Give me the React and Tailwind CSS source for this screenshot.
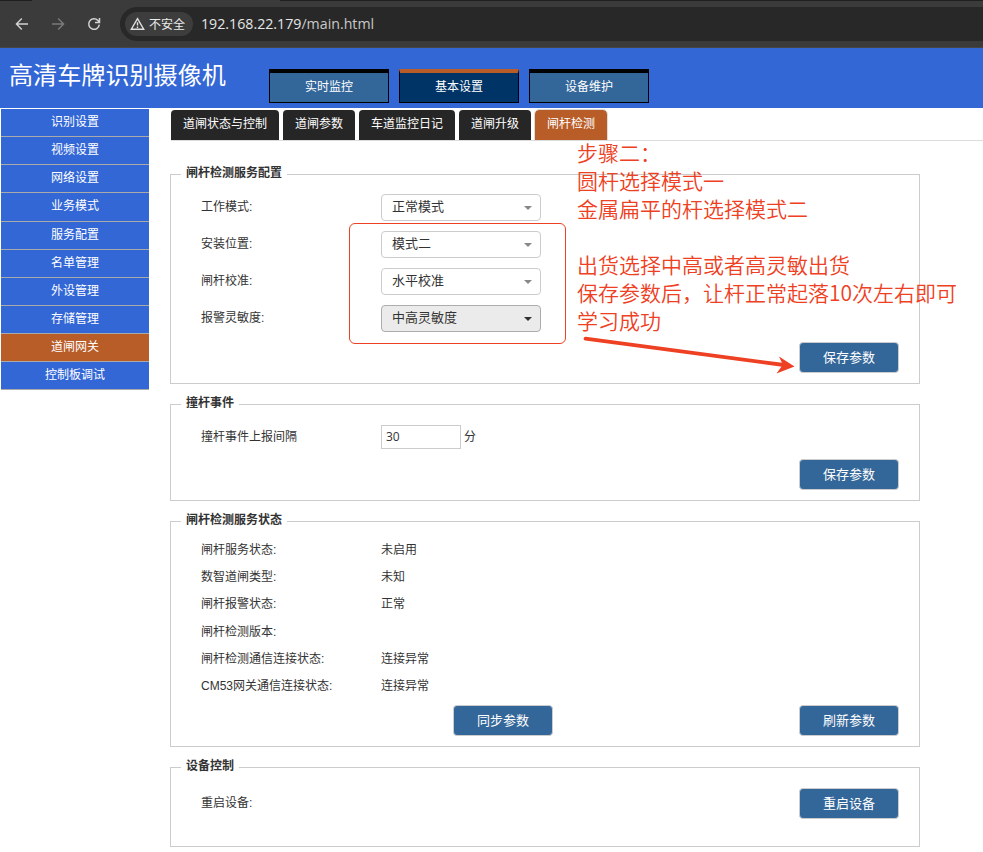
import { clsx } from 'clsx'

const TOP_NAV = ['实时监控', '基本设置', '设备维护']

const SIDE_NAV = [
  '识别设置', '视频设置', '网络设置', '业务模式', '服务配置',
  '名单管理', '外设管理', '存储管理', '道闸网关', '控制板调试',
]

const TABS = ['道闸状态与控制', '道闸参数', '车道监控日记', '道闸升级', '闸杆检测']

const SELECTS = [
  { label: '工作模式:', value: '正常模式' },
  { label: '安装位置:', value: '模式二' },
  { label: '闸杆校准:', value: '水平校准' },
  { label: '报警灵敏度:', value: '中高灵敏度', active: true },
]

const STATUS = [
  ['闸杆服务状态:', '未启用'],
  ['数智道闸类型:', '未知'],
  ['闸杆报警状态:', '正常'],
  ['闸杆检测版本:', ''],
  ['闸杆检测通信连接状态:', '连接异常'],
  ['CM53网关通信连接状态:', '连接异常'],
]

const NOTES = [
  '步骤二：',
  '圆杆选择模式一',
  '金属扁平的杆选择模式二',
  '',
  '出货选择中高或者高灵敏出货',
  '保存参数后，让杆正常起落10次左右即可',
  '学习成功',
]

function BrowserBar() {
  return (
    <div className="h-12 bg-[#3b3b3b] border-b border-[#464646] relative">
      {/* tab strip edge */}
      <div className="absolute top-0 left-0 w-8 h-px bg-[#202020]" />
      <div className="absolute top-0 left-[280px] right-0 h-px bg-[#202020]" />
      <div className="h-full flex items-center">
        <svg className="ml-[15px] shrink-0" width="14" height="14" viewBox="0 0 14 14" fill="none" stroke="#d2d2d2" strokeWidth="1.4">
          <path d="M13 7H1.8M6.8 1.6L1.4 7l5.4 5.4" />
        </svg>
        <svg className="ml-[22px] shrink-0" width="14" height="14" viewBox="0 0 14 14" fill="none" stroke="#7b7b7b" strokeWidth="1.4">
          <path d="M1 7h11.2M7.2 1.6L12.6 7l-5.4 5.4" />
        </svg>
        <svg className="ml-[22px] shrink-0" width="14" height="14" viewBox="0 0 14 14" fill="none" stroke="#d2d2d2" strokeWidth="1.5">
          <path d="M12.3 7.6a5.3 5.3 0 1 1-1.4-4.2L12.3 4.8M12.5 1v4.5H8" />
        </svg>
        <div className="ml-[19px] flex-1 h-[34px] mt-px rounded-l-full bg-[#282828] flex items-center pl-[5px]">
          <div className="w-[68px] h-6 rounded-full bg-[#3d3d3d] flex items-center pl-[5px] text-[12px] text-[#ececec] whitespace-nowrap">
            <svg className="mr-[4px] shrink-0" width="15" height="14" viewBox="0 0 15 14" fill="none" stroke="#e0e0e0" strokeWidth="1.4">
              <path d="M7.5 1.6L13.7 12.2H1.3zM7.5 5.2v3.3M7.5 9.5v1.4" />
            </svg>
            <span className="pt-px">不安全</span>
          </div>
          <span className="ml-2 text-[14.2px] font-['Open_Sans'] text-[#e6e6e6] whitespace-nowrap">
            192.168.22.179<span className="text-[#c9c9c9]">/main.html</span>
          </span>
        </div>
      </div>
    </div>
  )
}

function Header() {
  return (
    <header className="h-[60px] bg-[#3367d6] flex text-white">
      <h1 className="w-[269px] pl-[9px] pt-2.5 text-[24.1px] leading-9 whitespace-nowrap">高清车牌识别摄像机</h1>
      <nav className="flex gap-2.5 pt-[21px]">
        {TOP_NAV.map((name, i) => (
          <a
            key={name}
            className={clsx(
              'w-[120px] h-[34px] border border-black border-t-4 text-[12px] leading-[29px] text-center',
              i === 1 ? 'bg-[#003366] border-t-[#b85c28]' : 'bg-[#336699]'
            )}
          >
            {name}
          </a>
        ))}
      </nav>
    </header>
  )
}

function Sidebar() {
  return (
    <ul className="w-[149px] shrink-0 pl-px pt-px">
      {SIDE_NAV.map((name) => (
        <li
          key={name}
          className={clsx(
            'h-[28.125px] border-b border-[#aaaaaa] text-[12px] leading-[26px] text-center text-white',
            name === '道闸网关' ? 'bg-[#b85c28]' : 'bg-[#3367d6]'
          )}
        >
          {name}
        </li>
      ))}
    </ul>
  )
}

function Button({ children, className }) {
  return (
    <button className={clsx('block w-[100px] h-[31px] rounded border border-[#cccccc] bg-[#336699] text-white text-[13px] leading-[29px]', className)}>
      {children}
    </button>
  )
}

function Group({ title, className, children }) {
  return (
    <section className={clsx('w-[750px] border border-[#cccccc]', className)}>
      <h2 className="w-fit -mt-2.5 ml-2.5 px-[5px] h-[18px] leading-[17px] bg-white font-bold">{title}</h2>
      {children}
    </section>
  )
}

function Select({ value, active }) {
  return (
    <div
      className={clsx(
        'w-40 h-[27px] rounded border flex items-center justify-between pl-[10px] pr-2 text-[13px] leading-[24px]',
        active ? 'bg-[#ebebeb] border-[#adadad]' : 'bg-white border-[#cccccc]'
      )}
    >
      <span className="-mt-px">{value}</span>
      <i className={clsx('border-x-4 border-x-transparent border-t-4', active ? 'border-t-[#333333]' : 'border-t-[#888888]')} />
    </div>
  )
}

// red notes drawn over the page
function Annotations() {
  return (
    <>
      <div className="absolute left-[349px] top-[223px] w-[217px] h-[121px] rounded-md border border-[#ee4023]" />
      <div className="absolute left-[577px] top-[138px] text-[21px] font-[350] text-[#ee4023] whitespace-nowrap font-['Noto_Sans_CJK_SC',sans-serif]">
        {NOTES.map((line, i) => (
          <p key={i} className="h-7 leading-[28px]">{line}</p>
        ))}
      </div>
      <svg className="absolute left-[580px] top-[330px]" width="220" height="50" viewBox="580 330 220 50">
        <path d="M585.5 338.7L784 365" stroke="#ee4023" strokeWidth="3.8" strokeLinecap="round" />
        <path d="M794.5 366.6L779 356.5l3.8 8.3-6.3 8.8z" fill="#ee4023" />
      </svg>
    </>
  )
}

export default function App() {
  return (
    <div className="relative w-[983px] h-[852px] overflow-hidden bg-white text-[12px] text-[#333333] font-['Liberation_Sans','Noto_Sans_CJK_SC',sans-serif]">
      <BrowserBar />
      <Header />
      <div className="flex">
        <Sidebar />
        <main className="flex-1 pl-[21px]">
          <div className="h-[33px] ml-px pt-0.5 flex gap-1 border-b border-[#dddddd]">
            {TABS.map((name, i) => (
              <a
                key={name}
                className={clsx(
                  'h-[30px] px-3 rounded-t text-white leading-[29px] whitespace-nowrap',
                  i === TABS.length - 1 ? 'bg-[#b85c28] outline outline-[#dddddd]' : 'bg-[#262626]'
                )}
              >
                {name}
              </a>
            ))}
          </div>

          <Group title="闸杆检测服务配置" className="mt-[33px] h-[210px]">
            <div className="pt-[11px] pl-[30px]">
              {SELECTS.map((s) => (
                <div key={s.label} className="flex h-[37px]">
                  <span className="w-[180px] leading-[27px]">{s.label}</span>
                  <Select value={s.value} active={s.active} />
                </div>
              ))}
            </div>
            <Button className="ml-auto mr-5">保存参数</Button>
          </Group>

          <Group title="撞杆事件" className="mt-5 h-[97px]">
            <div className="flex h-9 pt-3 pl-[30px]">
              <span className="w-[180px] leading-[25px]">撞杆事件上报间隔</span>
              <div className="w-20 h-6 border border-[#cccccc] bg-white pl-1 leading-[22px] font-['Open_Sans']">30</div>
              <span className="ml-[3px] leading-[25px]">分</span>
            </div>
            <Button className="ml-auto mr-5 mt-2.5">保存参数</Button>
          </Group>

          <Group title="闸杆检测服务状态" className="mt-5 h-[226px]">
            <dl className="pt-[7px] pl-[30px]">
              {STATUS.map(([label, value]) => (
                <div key={label} className="flex h-[27.2px] leading-[27px]">
                  <dt className="w-[180px]">{label}</dt>
                  <dd>{value}</dd>
                </div>
              ))}
            </dl>
            <div className="flex justify-between pl-[282px] pr-5 mt-[5px]">
              <Button>同步参数</Button>
              <Button>刷新参数</Button>
            </div>
          </Group>

          <Group title="设备控制" className="mt-5 h-20">
            <div className="flex justify-between pt-3 pl-[30px] pr-5">
              <span className="leading-[30px]">重启设备:</span>
              <Button>重启设备</Button>
            </div>
          </Group>
        </main>
      </div>
      <Annotations />
    </div>
  )
}
